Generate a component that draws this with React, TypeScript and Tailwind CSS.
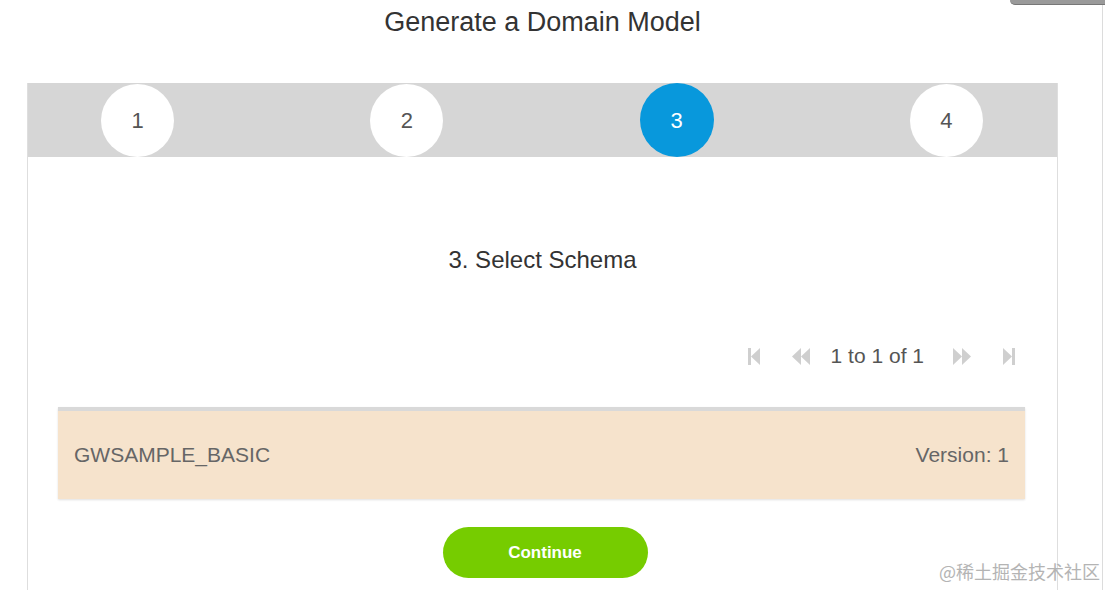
export default function App() {
  const steps = [1, 2, 3, 4];
  return (
    <div className="relative w-[1105px] h-[590px] overflow-hidden bg-white font-['Liberation_Sans',Arial,sans-serif]">
      {/* window edge top right */}
      <div className="absolute top-0 left-[1010px] w-[100px] h-[5px] bg-[#9a9a9a] rounded-bl-[6px] border-b border-[#777]" />
      <div className="absolute top-[5px] bottom-0 left-[1102px] w-px bg-[#dcdcdc]" />

      <div className="ml-[27px] w-[1031px]">
        <h1 className="h-[83px] pt-[4px] text-center text-[27px] leading-[36px] text-[#333]">
          Generate a Domain Model
        </h1>

        <div className="border-x border-[#dedede] h-[507px]">
          {/* Steps */}
          <div className="h-[74px] bg-[#d6d6d6] flex items-end justify-between pl-[73px] pr-[74px]">
            {steps.map((s) => (
              <div
                key={s}
                className={
                  s === 3
                    ? "w-[74px] h-[74px] rounded-full bg-[#0898dc] text-white flex items-center justify-center text-[22px]"
                    : "w-[73px] h-[73px] rounded-full bg-white text-[#555] flex items-center justify-center text-[22px]"
                }
              >
                {s}
              </div>
            ))}
          </div>

          <div className="pt-[88px] text-center text-[24px] leading-[30px] text-[#333]">
            3. Select Schema
          </div>

          {/* Pagination */}
          <div className="mt-[68px] flex items-center justify-end pr-[42px] h-[26px]">
            <svg width="12" height="17" viewBox="0 0 12 17" className="fill-[#cfcfcf]">
              <rect x="0" y="0" width="3" height="17" />
              <polygon points="12,0 3,8.5 12,17" />
            </svg>
            <svg width="18" height="17" viewBox="0 0 18 17" className="ml-[32px] fill-[#cfcfcf]">
              <polygon points="9,0 0,8.5 9,17" />
              <polygon points="18,0 9,8.5 18,17" />
            </svg>
            <span className="ml-[21px] text-[21px] text-[#555]">1 to 1 of 1</span>
            <svg width="18" height="17" viewBox="0 0 18 17" className="ml-[29px] fill-[#cfcfcf]">
              <polygon points="0,0 9,8.5 0,17" />
              <polygon points="9,0 18,8.5 9,17" />
            </svg>
            <svg width="12" height="17" viewBox="0 0 12 17" className="ml-[32px] fill-[#cfcfcf]">
              <polygon points="0,0 9,8.5 0,17" />
              <rect x="9" y="0" width="3" height="17" />
            </svg>
          </div>

          {/* Schema row */}
          <div className="mt-[38px] ml-[30px] mr-[32px] border-t-[4px] border-[#d9d9d9] bg-[#f6e3cc] h-[92px] flex items-center justify-between pl-[16px] pr-[16px] text-[21px] text-[#666] shadow-[0_1px_2px_rgba(0,0,0,0.12)]">
            <span>GWSAMPLE_BASIC</span>
            <span>Version: 1</span>
          </div>

          <div className="mt-[28px] flex justify-center pl-[5px]">
            <button className="w-[205px] h-[51px] rounded-full bg-[#76cc00] text-white text-[17px] font-bold">
              Continue
            </button>
          </div>
        </div>
      </div>

      <div className="absolute right-[5px] bottom-[5px] text-[18px] text-[#b4b4b4] font-['Noto_Sans_CJK_SC',sans-serif]">
        @稀土掘金技术社区
      </div>
    </div>
  );
}
